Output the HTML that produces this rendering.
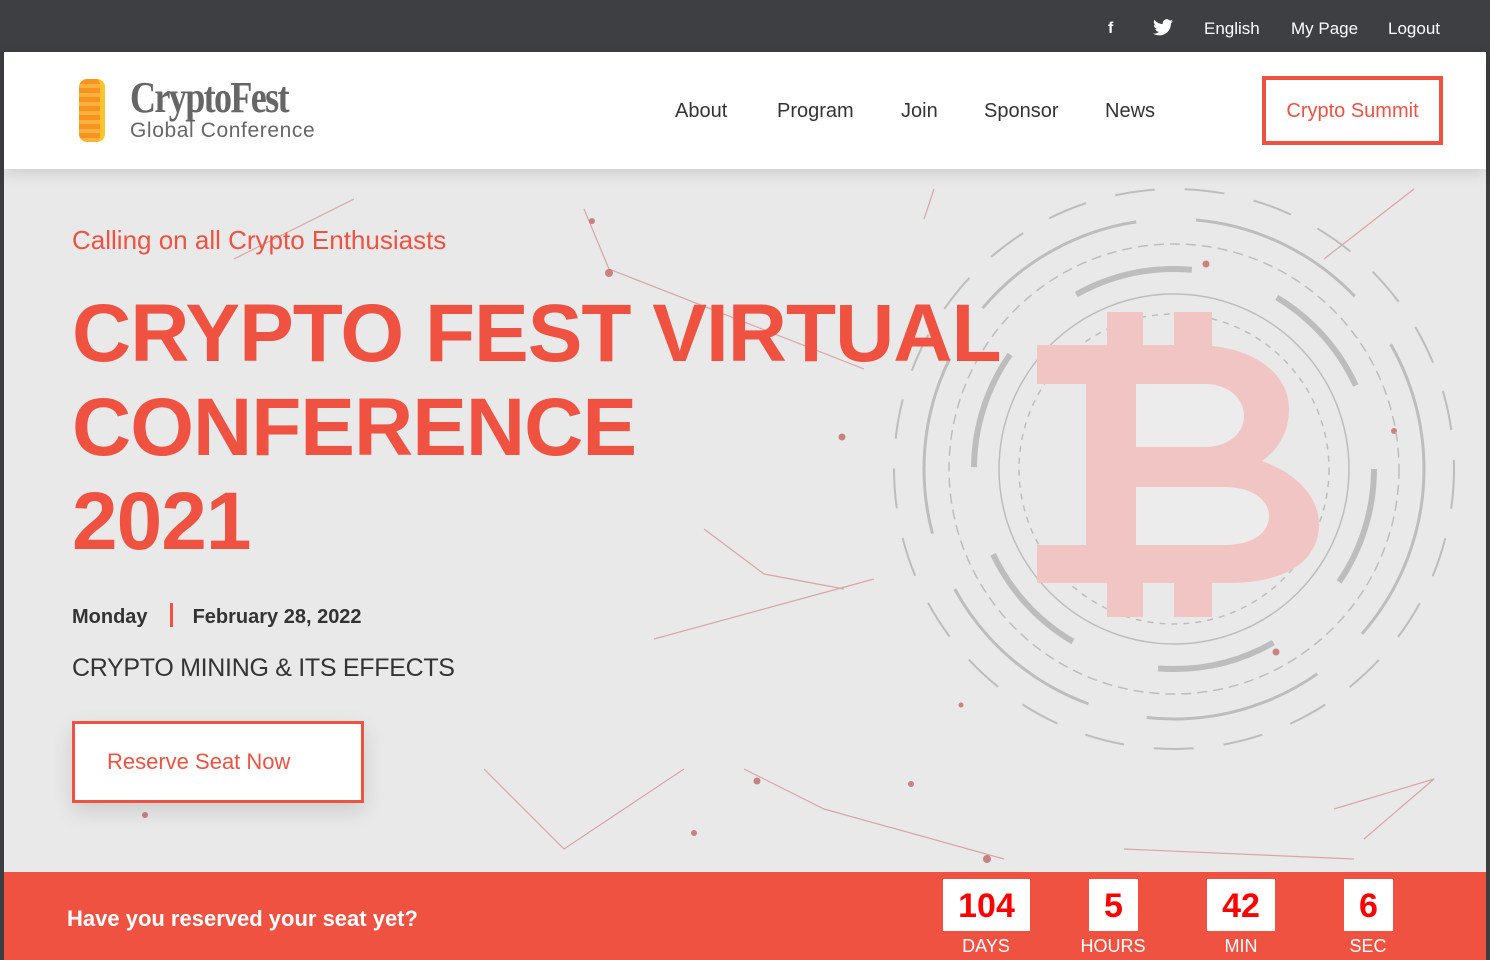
<!DOCTYPE html>
<html><head><meta charset="utf-8"><style>
*{margin:0;padding:0;box-sizing:border-box}
body{width:1490px;height:960px;overflow:hidden;background:#3b3d40;font-family:"Liberation Sans",sans-serif;position:relative}
.top{position:absolute;left:0;top:0;width:1490px;height:52px;background:#3d3f42;color:#fff;font-size:18px}
.top span{position:absolute;top:19px}
.hdr{position:absolute;left:4px;top:52px;width:1482px;height:117px;background:#fff;box-shadow:0 4px 14px rgba(0,0,0,.12);z-index:2}
.nav{position:absolute;top:48px;font-size:20px;color:#333}
.hero{position:absolute;left:4px;top:169px;width:1482px;height:703px;background:#e9e9e9;overflow:hidden}
.red{color:#f05242}
.band{position:absolute;left:4px;top:872px;width:1482px;height:88px;background:#f05242}
.cd{position:absolute;top:7px;background:#fff;color:#f00;font-weight:bold;font-size:34px;text-align:center;height:52px;line-height:54px}
.lb{position:absolute;top:64px;color:#fff;font-size:18px;text-align:center;width:120px}
</style></head><body>
<div class="top">
<span style="left:1108px;font-weight:bold;font-size:16px;top:20px">f</span>
<svg style="position:absolute;left:1153px;top:19px" width="20" height="17" viewBox="0 0 24 20"><path fill="#fff" d="M24 2.4a10 10 0 0 1-2.8.8A5 5 0 0 0 23.3.5a10 10 0 0 1-3.1 1.2A4.9 4.9 0 0 0 11.8 6 14 14 0 0 1 1.7.9a4.9 4.9 0 0 0 1.5 6.6A4.9 4.9 0 0 1 1 6.9a4.9 4.9 0 0 0 3.9 4.8 5 5 0 0 1-2.2.1 4.9 4.9 0 0 0 4.6 3.4A9.9 9.9 0 0 1 0 17.2 14 14 0 0 0 7.5 19.5c9 0 14-7.5 14-14v-.6A10 10 0 0 0 24 2.4z"/></svg>
<span style="left:1204px;font-size:17px">English</span><span style="left:1291px;font-size:17px">My Page</span><span style="left:1388px;font-size:17px">Logout</span>
</div>
<div class="hdr">
<div style="position:absolute;left:75px;top:27px;width:26px;height:63px;border-radius:8px;background:repeating-linear-gradient(#f7941d 0 5px,#fbb040 5px 9px);border-right:5px solid #fcc42a"></div>
<div style="position:absolute;left:126px;top:20px;font-family:'Liberation Serif',serif;font-weight:bold;font-size:44px;color:#666;letter-spacing:-2px;transform:scaleX(.82);transform-origin:left">CryptoFest</div>
<div style="position:absolute;left:126px;top:67px;font-size:21px;color:#666;letter-spacing:.6px">Global Conference</div>
<span class="nav" style="left:671px">About</span><span class="nav" style="left:773px">Program</span><span class="nav" style="left:897px">Join</span><span class="nav" style="left:980px">Sponsor</span><span class="nav" style="left:1101px">News</span>
<div style="position:absolute;left:1258px;top:24px;width:181px;height:69px;border:4px solid #f05242;color:#f05242;font-size:20px;text-align:center;line-height:63px">Crypto Summit</div>
</div>
<div class="hero">
<svg style="position:absolute;left:0;top:0" width="1482" height="703">
<g stroke="#d9a5a5" stroke-width="1.2" fill="none">
<path d="M580 40L605 100L860 200M700 360L760 405L840 420M650 470L870 410M740 600L820 640L1000 690M480 600L560 680L680 600M1330 640L1430 610L1360 670M1320 90L1410 20M230 90L350 30M920 50L930 20M1120 680L1350 690"/>
</g>
<g fill="#b55" opacity=".7"><circle cx="605" cy="104" r="4"/><circle cx="588" cy="52" r="3"/><circle cx="838" cy="268" r="3.5"/><circle cx="753" cy="612" r="3.5"/><circle cx="690" cy="664" r="3"/><circle cx="983" cy="690" r="4"/><circle cx="907" cy="615" r="3"/><circle cx="1202" cy="95" r="3.5"/><circle cx="1272" cy="483" r="3.5"/><circle cx="1390" cy="262" r="3"/><circle cx="141" cy="646" r="3"/><circle cx="957" cy="536" r="2.5"/></g>
<g fill="none" stroke="#bdbdbd" stroke-width="3">
<circle cx="1170" cy="300" r="250" stroke-dasharray="180 60"/>
<circle cx="1170" cy="300" r="225" stroke-width="1.5" stroke-dasharray="10 6"/>
<circle cx="1170" cy="300" r="200" stroke-width="6" stroke-dasharray="120 90"/>
<circle cx="1170" cy="300" r="175" stroke-width="1.5"/>
<circle cx="1170" cy="300" r="155" stroke-width="1.5" stroke-dasharray="6 6"/>
<circle cx="1170" cy="300" r="280" stroke-width="2" stroke-dasharray="40 30"/>
</g>
<g fill="#f2c5c5">
<rect x="1103" y="143" width="36" height="40"/><rect x="1170" y="143" width="38" height="40"/>
<rect x="1103" y="408" width="36" height="40"/><rect x="1170" y="408" width="38" height="40"/>
<path d="M1033 176H1190C1250 176 1285 205 1285 240C1285 262 1275 280 1258 292C1295 305 1315 330 1315 355C1315 390 1285 414 1225 414H1033V376H1082V215H1033Z"/>
</g>
<g fill="#ececec">
<path d="M1132 215H1200C1225 215 1240 230 1240 247C1240 264 1225 278 1200 278H1132Z"/>
<path d="M1132 318H1220C1250 318 1265 332 1265 347C1265 363 1250 376 1220 376H1132Z"/>
</g>
</svg>
<div class="red" style="position:absolute;left:68px;top:56px;font-size:26px">Calling on all Crypto Enthusiasts</div>
<div class="red" style="position:absolute;left:68px;top:118px;font-size:82px;font-weight:bold;line-height:94px;letter-spacing:-1px">CRYPTO FEST VIRTUAL<br>CONFERENCE<br>2021</div>
<div style="position:absolute;left:68px;top:434px;font-size:20px;font-weight:bold;color:#333">Monday<span style="display:inline-block;width:3px;height:24px;background:#f05242;margin:0 20px -4px 22px"></span>February 28, 2022</div>
<div style="position:absolute;left:68px;top:485px;font-size:25px;color:#333;letter-spacing:-.3px">CRYPTO MINING &amp; ITS EFFECTS</div>
<div style="position:absolute;left:68px;top:552px;width:292px;height:82px;border:3px solid #f05242;background:#fff;color:#f05242;font-size:22px;line-height:76px;padding-left:32px;box-shadow:0 8px 20px rgba(0,0,0,.12)">Reserve Seat Now</div>
</div>
<div class="band">
<div style="position:absolute;left:63px;top:34px;color:#fff;font-size:22px;font-weight:bold">Have you reserved your seat yet?</div>
<div class="cd" style="left:939px;width:87px">104</div><div class="lb" style="left:922px">DAYS</div>
<div class="cd" style="left:1085px;width:49px">5</div><div class="lb" style="left:1049px">HOURS</div>
<div class="cd" style="left:1203px;width:68px">42</div><div class="lb" style="left:1177px">MIN</div>
<div class="cd" style="left:1340px;width:49px">6</div><div class="lb" style="left:1304px">SEC</div>
</div>
</body></html>
